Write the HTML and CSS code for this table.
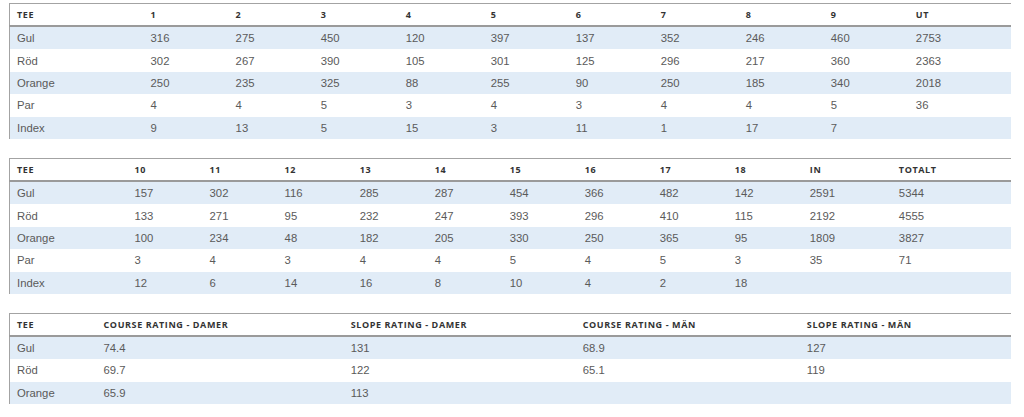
FILE: index.html
```html
<!DOCTYPE html>
<html lang="sv">
<head>
<meta charset="utf-8">
<title>Scorekort</title>
<link rel="stylesheet" href="styles.css">
</head>
<body>
<div class="page">
  <table class="score t-out">
    <colgroup>
      <col class="c-tee"><col span="9" class="c-hole"><col class="c-sum">
    </colgroup>
    <thead>
      <tr><th>TEE</th><th>1</th><th>2</th><th>3</th><th>4</th><th>5</th><th>6</th><th>7</th><th>8</th><th>9</th><th>UT</th></tr>
    </thead>
    <tbody>
      <tr><td>Gul</td><td>316</td><td>275</td><td>450</td><td>120</td><td>397</td><td>137</td><td>352</td><td>246</td><td>460</td><td>2753</td></tr>
      <tr><td>Röd</td><td>302</td><td>267</td><td>390</td><td>105</td><td>301</td><td>125</td><td>296</td><td>217</td><td>360</td><td>2363</td></tr>
      <tr><td>Orange</td><td>250</td><td>235</td><td>325</td><td>88</td><td>255</td><td>90</td><td>250</td><td>185</td><td>340</td><td>2018</td></tr>
      <tr><td>Par</td><td>4</td><td>4</td><td>5</td><td>3</td><td>4</td><td>3</td><td>4</td><td>4</td><td>5</td><td>36</td></tr>
      <tr><td>Index</td><td>9</td><td>13</td><td>5</td><td>15</td><td>3</td><td>11</td><td>1</td><td>17</td><td>7</td><td></td></tr>
    </tbody>
  </table>

  <table class="score t-in">
    <colgroup>
      <col class="c-tee"><col span="9" class="c-hole"><col class="c-in"><col class="c-tot">
    </colgroup>
    <thead>
      <tr><th>TEE</th><th>10</th><th>11</th><th>12</th><th>13</th><th>14</th><th>15</th><th>16</th><th>17</th><th>18</th><th>IN</th><th>TOTALT</th></tr>
    </thead>
    <tbody>
      <tr><td>Gul</td><td>157</td><td>302</td><td>116</td><td>285</td><td>287</td><td>454</td><td>366</td><td>482</td><td>142</td><td>2591</td><td>5344</td></tr>
      <tr><td>Röd</td><td>133</td><td>271</td><td>95</td><td>232</td><td>247</td><td>393</td><td>296</td><td>410</td><td>115</td><td>2192</td><td>4555</td></tr>
      <tr><td>Orange</td><td>100</td><td>234</td><td>48</td><td>182</td><td>205</td><td>330</td><td>250</td><td>365</td><td>95</td><td>1809</td><td>3827</td></tr>
      <tr><td>Par</td><td>3</td><td>4</td><td>3</td><td>4</td><td>4</td><td>5</td><td>4</td><td>5</td><td>3</td><td>35</td><td>71</td></tr>
      <tr><td>Index</td><td>12</td><td>6</td><td>14</td><td>16</td><td>8</td><td>10</td><td>4</td><td>2</td><td>18</td><td></td><td></td></tr>
    </tbody>
  </table>

  <table class="score t-rating">
    <colgroup>
      <col class="c-tee"><col class="c-crd"><col class="c-srd"><col class="c-crm"><col class="c-srm">
    </colgroup>
    <thead>
      <tr><th>TEE</th><th>COURSE RATING - DAMER</th><th>SLOPE RATING - DAMER</th><th>COURSE RATING - MÄN</th><th>SLOPE RATING - MÄN</th></tr>
    </thead>
    <tbody>
      <tr><td>Gul</td><td>74.4</td><td>131</td><td>68.9</td><td>127</td></tr>
      <tr><td>Röd</td><td>69.7</td><td>122</td><td>65.1</td><td>119</td></tr>
      <tr><td>Orange</td><td>65.9</td><td>113</td><td></td><td></td></tr>
    </tbody>
  </table>
</div>
</body>
</html>
```

FILE: styles.css
```css
html, body {
  margin: 0;
  padding: 0;
  background: #ffffff;
}

.page {
  padding: 3px 13px 0 9px;
  display: flex;
  flex-direction: column;
  gap: 19px;
}

.score {
  width: 1002px;
  table-layout: fixed;
  border-collapse: collapse;
  border-top: 1px solid #a3a3a3;
  border-left: 1px solid #a3a3a3;
  font-family: "Liberation Sans", Arial, sans-serif;
  font-size: 11.3px;
  color: #5a5a5a;
}

.score th {
  font-family: "Open Sans", "Liberation Sans", sans-serif;
  font-weight: 700;
  font-size: 9px;
  letter-spacing: 0.6px;
  color: #333333;
  text-align: left;
  height: 21px;
  padding: 0 0 0 7px;
  border-bottom: 2px solid #9a9a9a;
  vertical-align: middle;
}

.score td {
  height: 22.4px;
  padding: 0 0 0 7px;
  text-align: left;
  vertical-align: middle;
  white-space: nowrap;
}

.score tbody tr:nth-child(odd) td {
  background: #e1ecf7;
}

.t-out .c-tee { width: 134px; }
.t-out .c-hole { width: 85px; }
.t-out .c-sum { width: 102px; }

.t-in .c-tee { width: 118px; }
.t-in .c-hole { width: 75px; }
.t-in .c-in { width: 89px; }
.t-in .c-tot { width: 119px; }

.t-rating .c-tee { width: 87px; }
.t-rating .c-crd { width: 247px; }
.t-rating .c-srd { width: 232px; }
.t-rating .c-crm { width: 224px; }
.t-rating .c-srm { width: 211px; }
```
